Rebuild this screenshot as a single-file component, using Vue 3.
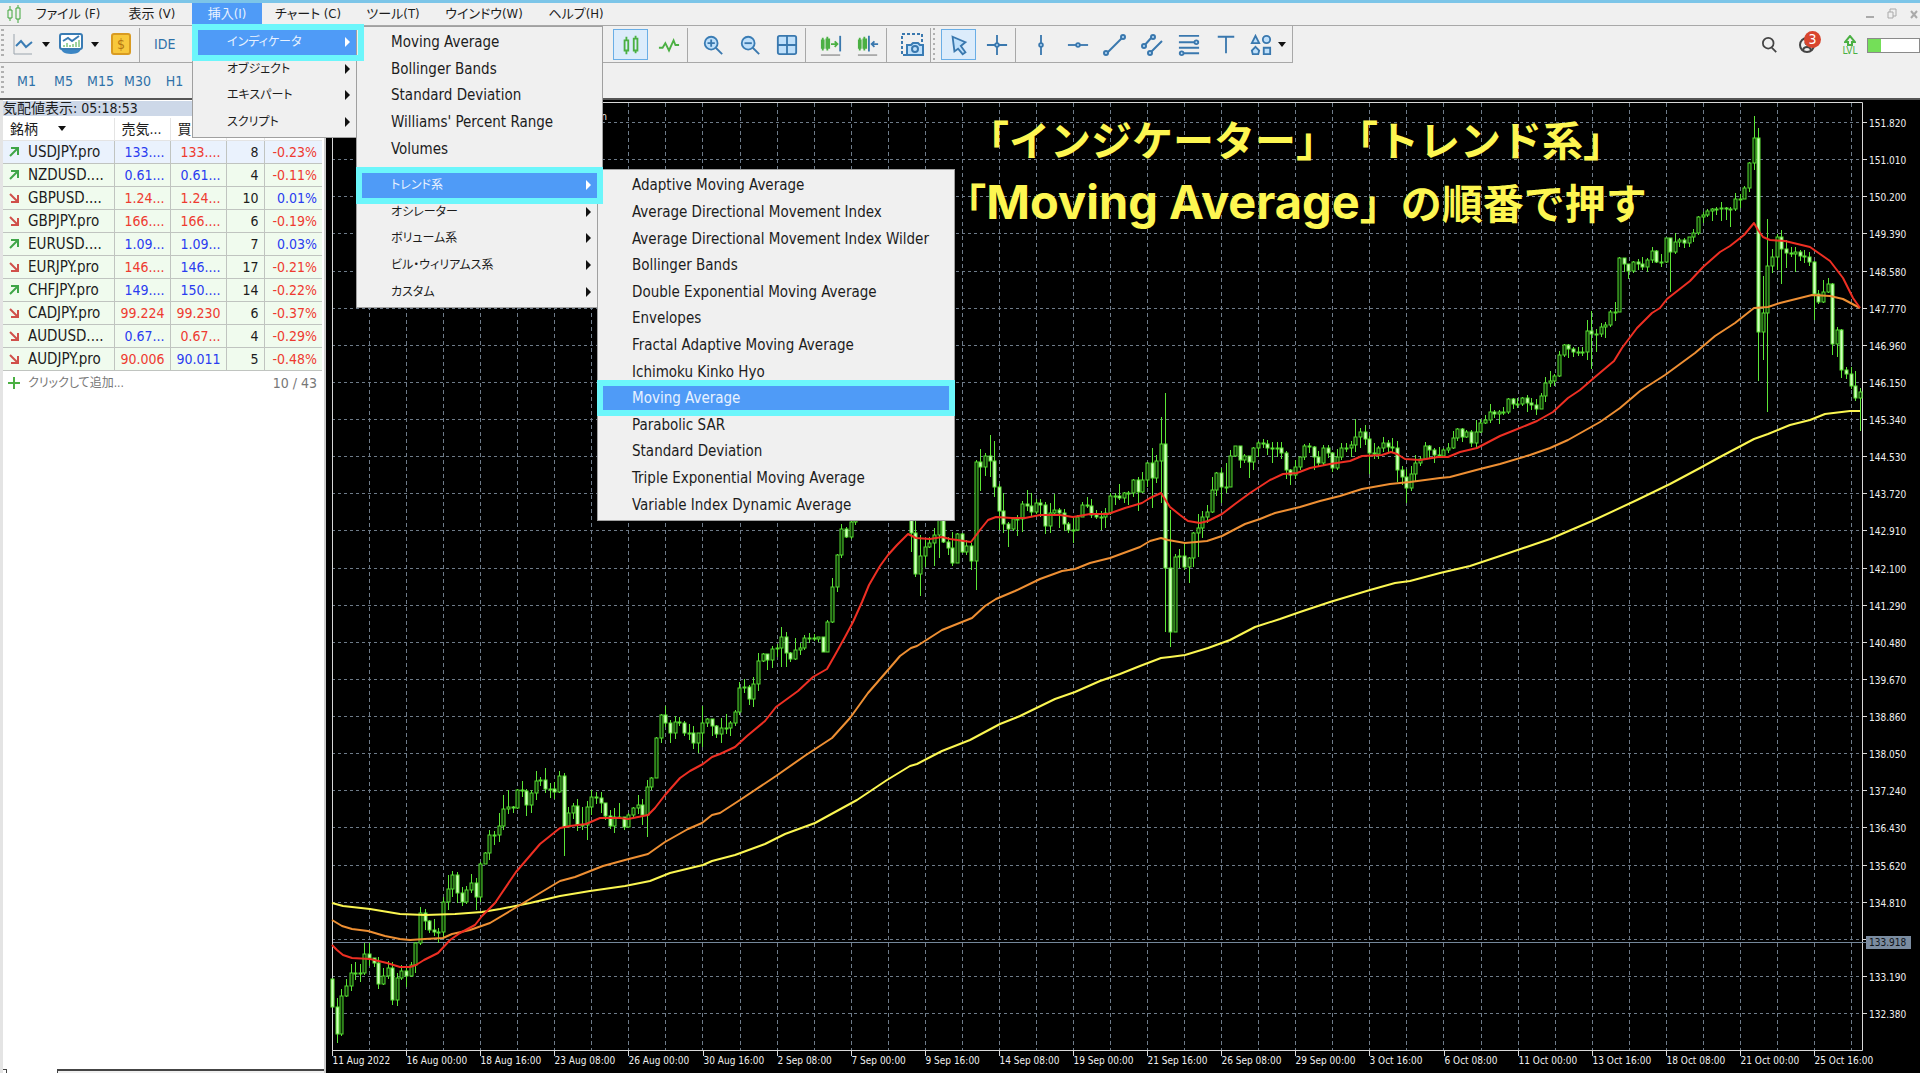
<script setup>
const menuBar = [
  { label: 'ファイル (F)', width: 88 },
  { label: '表示 (V)', width: 80 },
  { label: '挿入(I)', width: 70, open: true },
  { label: 'チャート (C)', width: 92 },
  { label: 'ツール(T)', width: 78 },
  { label: 'ウインドウ(W)', width: 104 },
  { label: 'ヘルプ(H)', width: 80 },
]
const insertMenu = ['インディケータ', 'オブジェクト', 'エキスパート', 'スクリプト']
const recentIndicators = ['Moving Average', 'Bollinger Bands', 'Standard Deviation', "Williams' Percent Range", 'Volumes']
const indicatorGroups = ['トレンド系', 'オシレーター', 'ボリューム系', 'ビル・ウィリアムス系', 'カスタム']
const trendMenu = [
  'Adaptive Moving Average', 'Average Directional Movement Index', 'Average Directional Movement Index Wilder',
  'Bollinger Bands', 'Double Exponential Moving Average', 'Envelopes', 'Fractal Adaptive Moving Average',
  'Ichimoku Kinko Hyo', 'Moving Average', 'Parabolic SAR', 'Standard Deviation',
  'Triple Exponential Moving Average', 'Variable Index Dynamic Average',
]
const timeframes = ['M1', 'M5', 'M15', 'M30', 'H1']

// name, direction, bid, bid colour, ask, ask colour, spread, daily change
const quotes = [
  ['USDJPY.pro', 'up', '133....', 'b', '133....', 'r', 8, '-0.23%'],
  ['NZDUSD....', 'up', '0.61...', 'b', '0.61...', 'b', 4, '-0.11%'],
  ['GBPUSD....', 'down', '1.24...', 'r', '1.24...', 'r', 10, '0.01%'],
  ['GBPJPY.pro', 'down', '166....', 'r', '166....', 'r', 6, '-0.19%'],
  ['EURUSD....', 'up', '1.09...', 'b', '1.09...', 'b', 7, '0.03%'],
  ['EURJPY.pro', 'down', '146....', 'r', '146....', 'b', 17, '-0.21%'],
  ['CHFJPY.pro', 'up', '149....', 'b', '150....', 'b', 14, '-0.22%'],
  ['CADJPY.pro', 'down', '99.224', 'r', '99.230', 'r', 6, '-0.37%'],
  ['AUDUSD....', 'down', '0.67...', 'b', '0.67...', 'r', 4, '-0.29%'],
  ['AUDJPY.pro', 'down', '90.006', 'r', '90.011', 'b', 5, '-0.48%'],
]

// high, low, close per bar in chart units; each bar opens at the previous close
const bars = `
979 1007 1007,998 1043 1034,989 1036 996,979 997 986,964 991 973,962 980 973,964 982 973,943 975 954,943 966 958,958 967 963,
957 989 984,968 985 976,961 979 968,962 1005 1000,973 1006 978,965 980 971,967 987 976,962 977 965,942 973 943,907 945 913,
909 930 921,920 933 930,919 936 932,928 943 932,897 937 902,875 910 889,871 897 875,872 903 893,887 906 902,886 904 890,
874 893 883,878 910 897,862 902 864,852 864 853,830 860 835,831 845 835,813 842 826,795 830 809,790 814 807,806 813 808,
789 809 790,781 797 791,789 816 805,790 813 793,771 800 781,777 786 780,768 793 789,783 798 789,782 799 792,771 793 776,
773 856 827,807 827 813,803 819 806,799 831 825,807 830 825,801 840 807,790 815 797,792 804 798,792 813 803,803 820 816,
810 829 826,808 833 817,803 818 817,817 830 827,813 828 815,807 817 808,795 814 805,799 825 815,780 837 787,777 790 778,
737 774 738,714 743 715,706 727 723,720 743 733,716 739 722,717 726 723,721 736 733,724 740 733,726 749 743,733 753 733,
706 747 723,718 727 719,719 736 726,725 738 734,718 743 728,714 734 728,721 736 723,710 726 712,682 715 688,679 693 687,
685 705 699,677 707 684,653 691 661,653 662 654,657 670 660,646 668 649,644 657 648,627 667 637,632 667 653,652 662 659,
638 660 650,643 655 648,635 650 638,633 643 638,634 641 639,637 642 637,637 652 652,620 652 622,578 623 587,554 592 555,
524 558 529,527 538 537,519 539 522,510 525 513,480 515 490,470 500 480,460 490 470,465 490 480,470 495 485,465 500 475,
460 490 470,465 495 485,470 500 480,475 505 490,480 510 495,490 552 533,500 577 574,535 596 556,540 567 547,537 548 543,
528 566 535,505 558 515,500 543 542,537 555 548,532 566 563,533 563 534,533 553 552,540 555 546,543 570 561,460 590 462,
449 491 467,453 476 456,435 477 461,441 497 487,484 530 511,493 533 524,522 547 529,518 531 519,515 536 519,501 532 504,
490 511 506,493 516 512,499 514 503,499 517 505,502 534 526,503 533 513,494 515 510,508 528 513,509 531 524,522 533 530,
518 543 530,515 531 517,502 517 505,497 508 506,499 518 515,510 519 517,511 530 517,508 528 513,493 515 496,493 505 496,
484 500 498,492 503 493,491 505 493,479 497 480,477 511 492,472 493 480,462 487 463,448 508 478,455 483 461,417 503 444,
393 632 568,510 647 632,554 632 557,549 568 556,542 570 567,557 583 558,532 567 533,514 557 528,511 538 517,505 523 512,
477 513 490,472 496 473,468 503 487,463 493 487,450 487 456,446 457 446,449 468 460,454 463 456,456 478 462,447 470 448,
441 457 443,439 448 444,440 455 448,442 463 449,442 457 448,442 459 453,451 479 470,469 485 475,460 479 467,457 470 457,
444 460 446,443 453 447,446 470 457,451 467 463,445 465 448,445 458 453,452 472 468,449 470 457,443 460 448,443 452 448,
441 457 445,419 452 437,428 448 432,425 445 439,436 474 453,443 459 454,446 459 448,437 452 443,440 453 447,438 452 448,
441 482 470,466 485 477,469 503 488,466 491 474,455 482 463,456 466 459,442 460 446,445 459 450,448 463 455,447 458 456,
448 458 450,443 453 448,431 449 438,428 441 429,428 442 437,430 438 432,430 447 443,420 448 432,419 433 423,415 424 420,
404 423 412,410 418 414,410 424 412,407 415 412,398 414 399,398 409 404,398 408 404,397 406 398,395 412 403,398 410 405,
399 415 409,393 409 396,377 402 383,371 387 381,374 386 376,351 377 355,344 357 345,344 358 349,347 357 352,347 356 352,
347 356 352,320 360 331,311 369 334,329 352 334,323 337 327,322 338 325,310 327 312,302 321 312,257 312 258,258 272 264,
264 279 271,261 273 262,259 270 264,257 270 267,258 272 260,247 263 251,250 263 262,254 267 262,238 263 238,238 292 252,
233 254 242,238 247 240,238 248 243,237 247 237,229 242 233,216 235 217,212 223 215,209 217 211,208 221 209,207 215 209,
202 221 208,207 220 209,207 227 209,193 211 199,194 208 199,186 199 188,162 192 163,116 170 138,128 381 332,276 360 313,
219 412 266,249 273 257,234 270 237,230 284 249,240 268 253,247 257 254,247 272 252,250 261 256,250 263 257,252 266 262,
261 320 294,290 304 302,280 303 292,278 293 284,283 355 344,327 357 330,329 378 370,367 379 374,367 389 386,371 401 398,388 431 392`
const barStep = 1528 / 330
let previousClose = 979
const candles = bars.trim().split(',').map((bar, i) => {
  const [high, low, close] = bar.trim().split(/\s+/).map(Number)
  const open = previousClose
  previousClose = close
  return {
    x: Math.round(332 + i * barStep),
    high, low,
    top: Math.min(open, close),
    bottom: Math.max(open, close),
    falling: close > open,
  }
})
const wicks = candles.map(c => `M${c.x + 0.5} ${c.high}V${c.top}M${c.x + 0.5} ${c.bottom}V${c.low}`).join('')

const fastAverage = '332,945 337,950 343,955 352,958 370,959 387,963 400,967 410,967 416,965 424,960 438,953 450,940 460,933 475,925 482,916 495,903 516,872 522,865 540,844 560,828 570,826 586,824 600,818 620,818 628,819 648,815 655,808 665,795 680,778 690,771 703,764 712,757 720,754 735,747 747,736 765,721 776,707 798,691 813,677 827,669 835,655 845,637 853,622 862,602 869,585 880,566 888,555 897,545 908,534 916,538 930,539 942,537 950,539 971,542 980,530 988,520 996,517 1012,518 1025,518 1040,515 1060,515 1073,517 1090,514 1108,514 1125,508 1142,503 1150,498 1161,493 1170,507 1180,515 1188,521 1200,523 1208,521 1222,514 1235,504 1250,493 1270,480 1283,474 1297,473 1310,468 1330,464 1350,461 1362,456 1382,455 1391,452 1397,454 1405,459 1420,460 1438,457 1448,457 1460,452 1477,448 1500,436 1515,430 1537,421 1553,412 1568,398 1580,390 1595,377 1614,361 1622,348 1637,328 1652,313 1660,308 1667,299 1690,281 1703,267 1720,252 1730,246 1744,235 1754,223 1758,230 1763,237 1770,240 1785,241 1810,247 1820,254 1830,261 1843,278 1853,298 1860,308'
const midAverage = '332,920 342,926 352,929 368,931 385,936 400,939 410,940 425,939 443,938 452,934 470,930 490,923 510,911 520,905 535,896 560,881 575,877 603,866 625,860 648,854 665,842 688,829 702,823 712,815 720,813 740,800 776,776 806,755 832,738 850,718 868,693 888,670 900,656 911,648 917,646 942,630 972,618 985,606 996,599 1015,591 1040,579 1062,571 1075,569 1090,563 1110,558 1140,547 1150,541 1161,538 1168,540 1185,543 1207,541 1222,536 1245,524 1260,519 1275,513 1300,507 1320,501 1340,496 1362,489 1390,484 1410,482 1440,478 1450,477 1480,469 1500,464 1530,455 1550,448 1568,440 1600,422 1620,408 1640,391 1665,375 1695,353 1715,336 1735,323 1754,308 1768,307 1780,303 1812,295 1830,296 1843,299 1860,308'
const slowAverage = '332,903 343,906 370,909 400,914 425,915 455,914 482,912 500,909 530,903 560,896 590,891 625,886 650,881 670,873 703,865 712,861 735,855 765,844 785,834 815,823 857,800 875,788 887,780 910,766 917,764 942,751 970,740 1000,724 1020,716 1055,699 1075,692 1100,681 1120,674 1140,666 1161,658 1170,657 1185,655 1208,648 1230,640 1255,627 1280,619 1300,612 1330,602 1370,590 1395,583 1410,581 1440,573 1470,566 1500,556 1550,539 1592,521 1637,500 1670,484 1700,468 1720,457 1754,439 1768,434 1790,425 1810,420 1825,414 1850,411 1860,411'

const verticals = Array.from({ length: 41 }, (_, i) => Math.round(369 + i * 37.05) + 0.5)
const prices = Array.from({ length: 25 }, (_, i) => ({
  label: (151.82 - i * 0.81).toFixed(3),
  y: Math.round(122 + i * 37.125) + 0.5,
}))
const times = ['11 Aug 2022', '16 Aug 00:00', '18 Aug 16:00', '23 Aug 08:00', '26 Aug 00:00', '30 Aug 16:00', '2 Sep 08:00',
  '7 Sep 00:00', '9 Sep 16:00', '14 Sep 08:00', '19 Sep 00:00', '21 Sep 16:00', '26 Sep 08:00', '29 Sep 00:00', '3 Oct 16:00',
  '6 Oct 08:00', '11 Oct 00:00', '13 Oct 16:00', '18 Oct 08:00', '21 Oct 00:00', '25 Oct 16:00']
  .map((label, i) => ({ label, x: Math.round(332 + i * 74.1) + 0.5 }))
</script>

<template>
  <div class="app">
    <header class="top">
      <nav class="menubar">
        <svg class="logo" viewBox="0 0 16 18" width="16" height="18"><path class="g" d="M4 1v4M4 13v3M12 0v3M12 14v4M2 5h4v8H2zM10 3h4v11h-4z" /></svg>
        <button v-for="m in menuBar" :key="m.label" :class="{ open: m.open }" :style="{ width: m.width + 'px' }">{{ m.label }}</button>
        <div class="window-buttons">
          <button aria-label="Minimize"><svg viewBox="0 0 10 12" width="10" height="12"><path d="M1 9h8" stroke-width="2" /></svg></button>
          <button aria-label="Restore"><svg viewBox="0 0 10 12" width="10" height="12"><path d="M3 4V1h6v7H6M1 4h5v6H1z" /></svg></button>
          <button aria-label="Close"><svg viewBox="0 0 10 12" width="10" height="12"><path d="M2 3l6 7M8 3l-6 7" stroke-width="2" /></svg></button>
        </div>
      </nav>

      <div class="toolbar">
        <div class="tools-left">
          <i class="grip"></i>
          <button class="drop" aria-label="New chart">
            <svg viewBox="0 0 22 22" width="22" height="22"><path d="M2 1v20h18" stroke="#9aa4ad" /><path class="b" d="M4 13l5-5 5 6 6-5" /></svg><span class="caret"></span>
          </button>
          <button class="drop" aria-label="Profiles">
            <svg viewBox="0 0 24 22" width="24" height="22"><path d="M2 15h20c0 3-3 6-10 6S2 18 2 15z" fill="#3c86c4" /><rect class="b" x="1" y="1" width="22" height="15" rx="2" fill="#fff" /><path class="b" d="M4 8l5-3 4 3 7-5" /><path class="g" d="M5 14v-2M8 14v-4M11 14v-2M14 14v-3M17 14V9M20 14V7" /></svg><span class="caret"></span>
          </button>
          <button class="gold" aria-label="New order">$</button>
          <i class="sep"></i>
          <button class="ide">IDE</button>
        </div>
        <div class="tools">
          <button class="on" aria-label="Candlesticks"><svg viewBox="0 0 24 24" width="22" height="22"><path class="g2" d="M7 3v4M7 18v4M17 2v3M17 18v3M5 7h4v11H5zM15 5h4v13h-4z" /></svg></button>
          <button aria-label="Line chart"><svg viewBox="0 0 24 24" width="22" height="22"><path class="g2" d="M1 15h4l3-5 4 8 5-11 2 5h4" /></svg></button>
          <i class="sep"></i>
          <button aria-label="Zoom in"><svg viewBox="0 0 24 24" width="22" height="22"><path class="b2" d="M15 15l7 7" /><circle class="b f" cx="10" cy="10" r="7" /><path class="b2" d="M6 10h8M10 6v8" /></svg></button>
          <button aria-label="Zoom out"><svg viewBox="0 0 24 24" width="22" height="22"><path class="b2" d="M15 15l7 7" /><circle class="b f" cx="10" cy="10" r="7" /><path class="b2" d="M6 10h8" /></svg></button>
          <button aria-label="Tile windows"><svg viewBox="0 0 24 24" width="22" height="22"><rect class="b2 f" x="2" y="2" width="20" height="20" rx="2" /><path class="b2" d="M12 2v20M2 12h20" /></svg></button>
          <i class="sep"></i>
          <button aria-label="Auto scroll"><svg viewBox="0 0 24 24" width="22" height="22"><path class="g2" d="M3 4v14M8 3v15M2 7h2v8H2zM7 6h3v9H7zM12 11h7M16 8l3 3-3 3" /><path class="b2" d="M22 2v17" /><path d="M1 23h21" stroke="#aaa" stroke-width="2" /></svg></button>
          <button aria-label="Chart shift"><svg viewBox="0 0 24 24" width="22" height="22"><path class="g2" d="M3 4v14M8 3v15M2 7h2v8H2zM7 6h3v9H7z" /><path class="b2" d="M13 2v17M23 11h-7M19 8l-3 3 3 3" /><path d="M1 23h21" stroke="#aaa" stroke-width="2" /></svg></button>
          <i class="sep"></i>
          <button aria-label="Screenshot"><svg viewBox="0 0 24 24" width="24" height="24"><path class="b2" stroke-dasharray="3 2" d="M6 22H2V1h20v8" /><path class="b f" d="M7 12h4l2-2h5l2 2h3v10H7z" /><circle class="b2" cx="15" cy="16" r="3" /></svg></button>
          <i class="sep wide"></i>
          <button class="on" aria-label="Cursor"><svg viewBox="0 0 24 24" width="22" height="22"><path class="b2 f" d="M5 3l14 6-5 4 5 7-3 2-5-6-4 3z" /></svg></button>
          <button aria-label="Crosshair"><svg viewBox="0 0 24 24" width="22" height="22"><path class="b2" d="M12 1v22M1 12h22" /><circle class="b2 f" cx="12" cy="12" r="2" /></svg></button>
          <i class="sep"></i>
          <button aria-label="Vertical line"><svg viewBox="0 0 24 24" width="22" height="22"><path class="b2" d="M12 1v22" /><circle class="b2 f" cx="12" cy="12" r="2" /></svg></button>
          <button aria-label="Horizontal line"><svg viewBox="0 0 24 24" width="22" height="22"><path class="b2" d="M1 12h22" /><circle class="b2 f" cx="12" cy="12" r="2" /></svg></button>
          <button aria-label="Trendline"><svg viewBox="0 0 24 24" width="24" height="24"><path class="b2" d="M3 21L21 3" /><circle class="b2 f" cx="3" cy="20" r="2" /><circle class="b2 f" cx="20" cy="4" r="2" /></svg></button>
          <button aria-label="Channel"><svg viewBox="0 0 24 24" width="24" height="24"><path class="b2" d="M3 14l9-10M10 20L22 8" /><circle class="b2 f" cx="4" cy="13" r="2" /><circle class="b2 f" cx="13" cy="4" r="2" /><circle class="b2 f" cx="10" cy="20" r="2" /></svg></button>
          <button aria-label="Fibonacci"><svg viewBox="0 0 24 24" width="22" height="22"><path class="b2" d="M1 2h22M1 9h22M1 15h22M1 21h22" /><circle class="b2 f" cx="20" cy="9" r="2" /><circle class="b2 f" cx="4" cy="21" r="2" /></svg></button>
          <button aria-label="Text"><svg viewBox="0 0 24 24" width="22" height="22"><path class="b2" d="M3 3h18M12 3v18" /></svg></button>
          <button class="shapes" aria-label="Objects"><svg viewBox="0 0 24 24" width="22" height="22"><path class="b2 f" d="M6 2l4 8H2zM15 15h7v7h-7zM6 14l4 4-1 4H3l-1-4z" /><circle class="b2 f" cx="18" cy="6" r="4" /></svg><span class="caret"></span></button>
        </div>
        <div class="status">
          <button aria-label="Search"><svg viewBox="0 0 18 18" width="16" height="16"><circle cx="7" cy="7" r="6" stroke="#444" stroke-width="2" /><path d="M11 12l5 5" stroke="#444" stroke-width="2" /></svg></button>
          <button class="person" aria-label="Notifications"><svg viewBox="0 0 18 18" width="18" height="18"><circle cx="9" cy="9" r="7" stroke="#444" stroke-width="2" /><circle cx="9" cy="7" r="2" stroke="#444" /><path d="M5 14c1-4 7-4 8 0" stroke="#444" stroke-width="2" /></svg><span class="badge">3</span></button>
          <div class="level"><svg viewBox="0 0 12 11" width="12" height="11"><path class="g2" d="M4 10V7H1l5-6 5 6H8v3z" /></svg>LVL</div>
          <div class="meter"><span></span></div>
        </div>
      </div>

      <div class="timeframes">
        <i class="grip"></i>
        <button v-for="t in timeframes" :key="t">{{ t }}</button>
      </div>

      <ul class="menu insert-menu">
        <li v-for="(m, i) in insertMenu" :key="m" class="kana" :class="{ active: i === 0 }"><button>{{ m }}<span class="more"></span></button></li>
      </ul>
      <ul class="menu indicator-menu">
        <li v-for="m in recentIndicators" :key="m"><button>{{ m }}</button></li>
        <li class="divider"></li>
        <li v-for="(m, i) in indicatorGroups" :key="m" class="kana" :class="{ active: i === 0 }"><button>{{ m }}<span class="more"></span></button></li>
      </ul>
      <ul class="menu trend-menu">
        <li v-for="(m, i) in trendMenu" :key="m" :class="{ active: i === 8 }"><button>{{ m }}</button></li>
      </ul>
    </header>

    <main class="workspace">
      <aside class="watch">
        <h2>気配値表示: 05:18:53</h2>
        <table>
          <colgroup><col class="c1"><col class="c2"><col class="c2"><col class="c3"><col></colgroup>
          <thead><tr><th>銘柄<span class="caret"></span></th><th>売気...</th><th>買気...</th><th></th><th></th></tr></thead>
          <tbody>
            <tr v-for="q in quotes" :key="q[0]">
              <td class="symbol"><span><svg viewBox="0 0 10 10" width="10" height="10"><path v-if="q[1] === 'up'" stroke="#3fa648" stroke-width="2" d="M1 9l8-8M2 1h7v7" /><path v-else stroke="#d0504a" stroke-width="2" d="M1 1l8 8M9 2v7H2" /></svg>{{ q[0] }}</span></td>
              <td :class="q[3]">{{ q[2] }}</td>
              <td :class="q[5]">{{ q[4] }}</td>
              <td>{{ q[6] }}</td>
              <td :class="q[7][0] === '-' ? 'r' : 'b'">{{ q[7] }}</td>
            </tr>
          </tbody>
        </table>
        <div class="add"><svg viewBox="0 0 12 12" width="12" height="12"><path class="g2" d="M6 0v12M0 6h12" /></svg><button>クリックして追加...</button><span>10 / 43</span></div>
        <div class="tabs"><i></i><b></b></div>
      </aside>

      <section class="chart">
        <svg viewBox="330 100 1590 973" class="plot">
          <path class="grid tall" :d="verticals.map(x => `M${x} 103V1050`).join('')" />
          <path class="grid" :d="prices.map(p => `M332 ${p.y}H1862`).join('')" />
          <path class="frame" d="M332.500 1056V102.500H1862.500V1050.500H332" />
          <path class="frame" :d="prices.map(p => `M1862 ${p.y}h5`).join('') + times.map(t => `M${t.x} 1050v6`).join('')" />
          <path d="M333 942.500H1868" class="bid" />
          <path :d="wicks" class="wick" />
          <rect v-for="(c, i) in candles" :key="i" :x="c.x - 1" :y="c.top" width="3" :height="Math.max(1, c.bottom - c.top)" :class="c.falling ? 'fall' : 'rise'" />
          <polyline :points="slowAverage" stroke="#fbf651" />
          <polyline :points="midAverage" stroke="#ee8f33" />
          <polyline :points="fastAverage" stroke="#ee2f23" />
          <text x="607" y="120" text-anchor="end">Yen</text>
          <text v-for="p in prices" :key="p.label" x="1869" :y="p.y + 4">{{ p.label }}</text>
          <text v-for="t in times" :key="t.label" :x="t.x" y="1064">{{ t.label }}</text>
          <rect x="1866" y="936" width="45" height="13" fill="#7b8ca0" />
          <text x="1869" y="946" class="tag">133.918</text>
        </svg>
        <p class="note">「インジケーター」「トレンド系」<br>「<span>Moving Average</span>」の順番で押す</p>
      </section>
    </main>
  </div>
</template>

<style>
body { margin: 0; background: #f0f0f0; }
</style>

<style scoped>
.app { min-height: 100vh; display: flex; flex-direction: column; background: #f0f0f0; color: #1c1c1c; font: 14px/20px "DejaVu Sans Condensed", "Noto Sans CJK JP", sans-serif; font-feature-settings: "palt"; overflow: hidden; }
button { font: inherit; font-feature-settings: inherit; color: inherit; background: none; border: 0; padding: 0; margin: 0; white-space: nowrap; }
svg { fill: none; display: block; flex: none; }
.g { stroke: #3fa63a; }
.g2 { stroke: #4bb043; stroke-width: 2; }
.b { stroke: #3a7cb4; stroke-width: 2; }
.b2 { stroke: #3a78ae; stroke-width: 2; }
.f { fill: #bfe0fb; }
.top { position: relative; z-index: 2; border-top: 3px solid #7cc5e8; border-bottom: 2px solid #555; height: 95px; }
.menubar { display: flex; align-items: stretch; height: 22px; border-bottom: 1px solid #a8a8a8; font-size: 13px; }
.menubar button { line-height: 22px; }
.logo { margin: 2px 2px 0 6px; }
.open { background: #4f9bf7; color: #e8f2ff; }
.window-buttons { margin-left: auto; display: flex; gap: 12px; align-items: center; padding-right: 1px; stroke: #aaa; }
.toolbar { display: flex; align-items: stretch; height: 37px; }
.tools-left, .tools { display: flex; align-items: center; border-bottom: 1px solid #a8a8a8; }
.tools-left { width: 613px; flex: none; }
.tools { border-right: 1px solid #a8a8a8; }
.grip { align-self: stretch; width: 3px; margin: 3px 8px 3px 1px; background: repeating-linear-gradient(#b0b0b0 0 2px, transparent 2px 5px); }
.drop { display: flex; align-items: center; gap: 8px; margin-right: 9px; }
.caret { border: 4px solid transparent; border-top: 5px solid #111; border-bottom: 0; display: inline-block; }
.gold { width: 20px; height: 22px; margin: 0 8px 0 3px; border: 2px solid #d99b22; border-radius: 3px; background: #f8c83c; color: #b57612; line-height: 18px; }
.sep { align-self: stretch; width: 1px; margin: 2px 6px 0 0; background: #a8a8a8; }
.sep.wide { width: 5px; background: linear-gradient(90deg, #a8a8a8 1px, transparent 1px 3px), repeating-linear-gradient(#b0b0b0 0 2px, transparent 2px 5px); background-position: 0 0, 3px 0; background-repeat: no-repeat; }
.ide { color: #2f71a8; margin-left: 8px; }
.tools button { width: 37px; height: 31px; display: flex; align-items: center; justify-content: center; box-sizing: border-box; margin-top: 1px; }
.tools button.on { border: 1px solid #6aaee6; background: #dcecfb; width: 35px; margin-right: 2px; }
.tools .shapes { width: 48px; gap: 6px; }
.status { margin-left: auto; display: flex; align-items: center; }
.status button { width: 36px; display: flex; }
.person { position: relative; }
.badge { position: absolute; left: 6px; top: -5px; width: 17px; height: 17px; border-radius: 50%; background: #d8452e; color: #fff; line-height: 17px; text-align: center; }
.level { width: 16px; margin: 0 9px 0 8px; display: flex; flex-direction: column; align-items: center; color: #4bb043; font-size: 10px; line-height: 9px; }
.meter { width: 51px; height: 13px; border: 1px solid #8a8a8a; background: #fff; margin-top: 2px; }
.meter span { display: block; width: 13px; height: 13px; background: #74df58; }
.timeframes { display: flex; align-items: center; height: 35px; color: #2f71a8; }
.timeframes .grip { margin-right: 4px; }
.timeframes button { width: 37px; text-align: center; }

.menu { position: absolute; display: flex; flex-direction: column; box-sizing: border-box; margin: 0; padding: 2px 5px; list-style: none; background: #f0f0f0; border: 1px solid #a0a0a0; font-size: 15px; }
.menu li { flex: 1; display: flex; position: relative; }
.menu li.divider { flex: 0 0 10px; }
.menu .kana { font-size: 12px; }
.menu button { flex: 1; display: flex; align-items: center; justify-content: space-between; padding: 0 6px 0 29px; }
.more { border: 5px solid transparent; border-left: 5px solid #111; border-right: 0; }
.active { color: #e8f2ff; }
.active button { background: #4f9bf7; }
.active .more { border-left-color: #fff; }
.active::after { content: ""; position: absolute; z-index: 3; inset: -5px -6px; border: 6px solid #6cf6fb; pointer-events: none; }
.insert-menu { left: 192px; top: 23px; width: 165px; height: 112px; padding-right: 0; }
.insert-menu .active::after { right: -8px; }
.indicator-menu { left: 356px; top: 23px; width: 247px; height: 282px; }
.trend-menu { left: 597px; top: 166px; width: 358px; height: 352px; }

.workspace { flex: 1; display: flex; align-items: stretch; }
.watch { width: 326px; flex: none; display: flex; flex-direction: column; box-sizing: border-box; padding-left: 3px; background: #fff; border-right: 2px solid #ccc; box-shadow: inset 3px 0 #e4e4e4; }
.watch h2 { margin: 1px 2px 2px 0; height: 15px; background: #cdd8e8; font-size: 14px; line-height: 15px; font-weight: 400; }
table { width: 319px; table-layout: fixed; border-collapse: collapse; }
.c1 { width: 111px; } .c2 { width: 56px; } .c3 { width: 38px; }
th, td { box-sizing: border-box; height: 23px; padding: 0 5px; white-space: nowrap; font-weight: 400; text-align: right; border-right: 1px solid #c0c4c0; border-bottom: 1px solid #c0c4c0; line-height: 20px; }
th:last-child, td:last-child { border-right: 0; }
th { height: 22px; text-align: left; padding-left: 7px; border-color: #e4e4e4; }
th .caret { margin: 0 0 3px 20px; }
td { background: #f0fbee; }
tr:first-child td { background: #eaf2fd; }
.symbol { font-size: 15px; }
.symbol span { display: flex; align-items: center; gap: 9px; padding-left: 1px; }
.r { color: #ee3a30; }
.b:is(td) { color: #2a3cf0; }
.add { display: flex; align-items: center; height: 25px; padding: 0 7px 0 5px; color: #777; }
.add button { margin-left: 8px; font-size: 12px; }
.add span { margin-left: auto; }
.tabs { margin-top: auto; height: 4px; display: flex; gap: 50px; }
.tabs i { width: 3px; border-top: 1px solid #444; border-right: 1px solid #444; }
.tabs b { flex: 1; border-top: 2px solid #444; border-left: 1px solid #444; background: #f0f0f0; }

.chart { position: relative; flex: 1; min-width: 0; background: #000; border-left: 4px solid #000; }
.plot { width: 100%; height: auto; }
.grid { stroke: #6e7b89; stroke-dasharray: 3 3; }
.grid.tall { stroke-dasharray: 4 3; }
.frame { stroke: #d8d8d8; }
.bid { stroke: #74879a; }
.wick { stroke: #5ce636; }
.rise { fill: #0a2e05; stroke: #55dc30; }
.fall { fill: #d3ffc0; stroke: #5ce636; }
polyline { stroke-width: 2; stroke-linejoin: round; }
text { fill: #f0f0f0; font-size: 10px; }
.tag { fill: #10151a; }
.note { position: absolute; top: 7px; left: 608px; width: 716px; margin: 0; color: #fdf651; font: 700 41px/63px "Noto Sans CJK JP", sans-serif; font-feature-settings: normal; text-spacing-trim: space-all; text-align: center; white-space: nowrap; }
.note span { font: 700 47px/40px Inter, sans-serif; }
</style>
